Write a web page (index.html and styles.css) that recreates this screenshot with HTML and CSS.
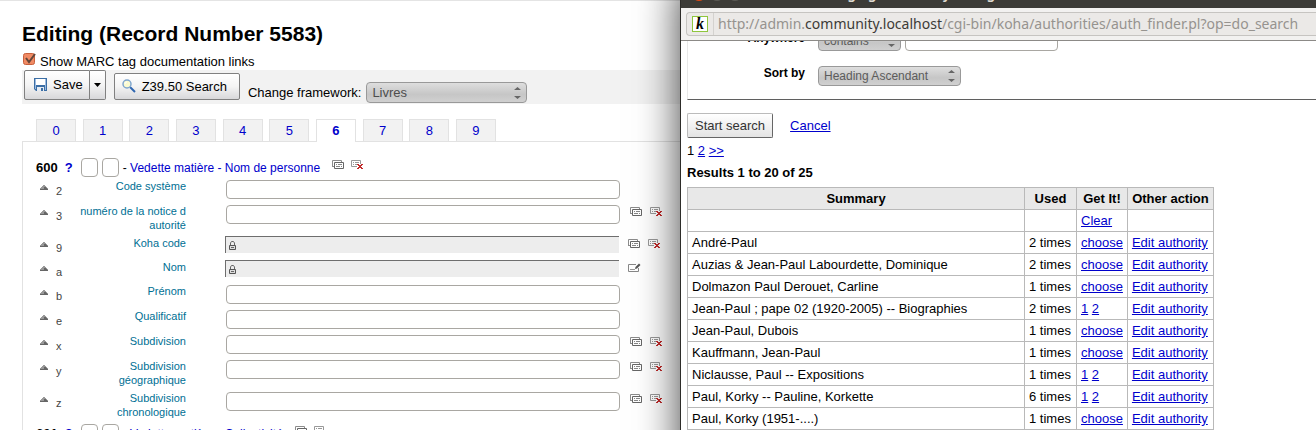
FILE: index.html
```html
<!DOCTYPE html>
<html lang="en">
<head>
    <meta charset="UTF-8">
    <meta name="viewport" content="width=device-width, initial-scale=1.0">
    <title>Koha - Editing record</title>
    <link rel="stylesheet" href="styles.css">
</head>
<body>
    <!-- Shared icons -->
    <svg class="sprite" aria-hidden="true">
        <symbol id="icon-up" viewBox="0 0 8 5">
            <path d="M3 0h2v1h1v1h1v1h1v2H0V3h1V2h1V1h1z" fill="#999"/>
            <path d="M0 4h8v1H0zM4 2h2v1h1v1H4z" fill="#666"/>
        </symbol>
        <symbol id="icon-clone" viewBox="0 0 12 9">
            <path d="M.5 6.500V.5h9v2" fill="none" stroke="#8c8c8c"/>
            <path d="M0 6.500h2" stroke="#8c8c8c"/>
            <path d="M2.500 2.500h9v6h-9z" fill="#fff" stroke="#666"/>
            <path d="M4 4.500h1M6 4.500h4M4 6.500h4M9 6.500h1" stroke="#888"/>
        </symbol>
        <symbol id="icon-delete" viewBox="0 0 12 9">
            <path d="M6 6.500H.5v-6h9V4" fill="#fff" stroke="#999"/>
            <path d="M2 2.500h1M4 2.500h4M2 4.500h1M4 4.500h2" stroke="#999"/>
            <path d="M6 4h2v1h2V4h2v1h-1v1h-1v1h1v1h1v1h-2V8H8v1H6V8h1V7h1V6H7V5H6z" fill="#c12a2a"/>
        </symbol>
        <symbol id="icon-edit" viewBox="0 0 13 9">
            <path d="M8 1.500H.5v7h10V5" fill="#fff" stroke="#888"/>
            <path d="M2 6.500h5" stroke="#999"/>
            <path d="M7 6l.5-2L11 .5 12.500 2 9 5.500z" fill="#555"/>
        </symbol>
        <symbol id="icon-lock" viewBox="0 0 7 9">
            <path d="M1.500 4V2L2.500.5h2L5.500 2v2" fill="none" stroke="#666"/>
            <path d="M.5 4.500h6v4h-6z" fill="#ddd" stroke="#555"/>
            <path d="M2 6.500h3" stroke="#666"/>
        </symbol>
    </svg>

    <main class="editor">
        <h1>Editing (Record Number 5583)</h1>
        <div class="doc-links">
            <input type="checkbox" id="marcDocs" checked>
            <label for="marcDocs">Show MARC tag documentation links</label>
        </div>

        <div class="toolbar">
            <div class="split-button">
                <button type="button" class="btn-save">
                    <svg width="13" height="13" viewBox="0 0 13 13" aria-hidden="true">
                        <path d="M0 0h13v13H2l-2-2z" fill="#3b6ea5"/>
                        <path d="M2 1h9v6H2z" fill="#fff"/>
                        <path d="M1 1h1v10H1zM11 1h1v11h-1z" fill="#9dbbe0"/>
                        <path d="M3 9h7v4H3z" fill="#e4eaf2"/>
                        <path d="M7 10h2v3H7z" fill="#3b6ea5"/>
                    </svg>
                    Save
                </button>
                <button type="button" class="btn-more" aria-label="More save options">
                    <svg width="7" height="4" viewBox="0 0 7 4" aria-hidden="true"><path d="M0 0h7L3.500 4z" fill="#000"/></svg>
                </button>
            </div>
            <button type="button" class="btn-search">
                <svg width="14" height="14" viewBox="0 0 14 14" aria-hidden="true">
                    <path d="M8 8l5 5" stroke="#2f66b0" stroke-width="2"/>
                    <circle cx="5" cy="5" r="4" fill="#fbfbd0" stroke="#7fa6cf" stroke-width="1.500"/>
                    <path d="M3 5a2 2 0 0 1 2-2" fill="none" stroke="#fff"/>
                </svg>
                Z39.50 Search
            </button>
            <div class="framework">
                <label for="framework">Change framework:</label>
                <select id="framework"><option>Livres</option></select>
            </div>
        </div>

        <nav class="tabs">
            <a href="#tab0">0</a>
            <a href="#tab1">1</a>
            <a href="#tab2">2</a>
            <a href="#tab3">3</a>
            <a href="#tab4">4</a>
            <a href="#tab5">5</a>
            <a href="#tab6" class="active">6</a>
            <a href="#tab7">7</a>
            <a href="#tab8">8</a>
            <a href="#tab9">9</a>
        </nav>

        <section class="tab-content" id="tab6">
            <div class="tag-head">
                <b>600</b>
                <a class="help" href="#doc600">?</a>
                <input type="text" class="indicator" aria-label="600 indicator 1">
                <input type="text" class="indicator" aria-label="600 indicator 2">
                <span class="tag-name">- <a href="#tag600">Vedette matière - Nom de personne</a></span>
                <button type="button" class="icon-btn" aria-label="Repeat tag"><svg width="12" height="9"><use href="#icon-clone"/></svg></button>
                <button type="button" class="icon-btn" aria-label="Delete tag"><svg width="12" height="9"><use href="#icon-delete"/></svg></button>
            </div>

            <div class="subfield">
                <svg class="up" width="8" height="5"><use href="#icon-up"/></svg>
                <span class="code">2</span>
                <label for="sf2">Code système</label>
                <input type="text" id="sf2">
                <div class="actions"></div>
            </div>
            <div class="subfield">
                <svg class="up" width="8" height="5"><use href="#icon-up"/></svg>
                <span class="code">3</span>
                <label for="sf3">numéro de la notice d autorité</label>
                <input type="text" id="sf3">
                <div class="actions">
                    <button type="button" class="icon-btn" aria-label="Clone"><svg width="12" height="9"><use href="#icon-clone"/></svg></button>
                    <button type="button" class="icon-btn" aria-label="Delete"><svg width="12" height="9"><use href="#icon-delete"/></svg></button>
                </div>
            </div>
            <div class="subfield locked">
                <svg class="up" width="8" height="5"><use href="#icon-up"/></svg>
                <span class="code">9</span>
                <label for="sf9">Koha code</label>
                <div class="readonly">
                    <svg width="7" height="9"><use href="#icon-lock"/></svg>
                    <input type="text" id="sf9" readonly>
                </div>
                <div class="actions">
                    <button type="button" class="icon-btn" aria-label="Clone"><svg width="12" height="9"><use href="#icon-clone"/></svg></button>
                    <button type="button" class="icon-btn" aria-label="Delete"><svg width="12" height="9"><use href="#icon-delete"/></svg></button>
                </div>
            </div>
            <div class="subfield locked">
                <svg class="up" width="8" height="5"><use href="#icon-up"/></svg>
                <span class="code">a</span>
                <label for="sfa">Nom</label>
                <div class="readonly">
                    <svg width="7" height="9"><use href="#icon-lock"/></svg>
                    <input type="text" id="sfa" readonly>
                </div>
                <div class="actions">
                    <button type="button" class="icon-btn" aria-label="Tag editor"><svg width="13" height="9"><use href="#icon-edit"/></svg></button>
                </div>
            </div>
            <div class="subfield">
                <svg class="up" width="8" height="5"><use href="#icon-up"/></svg>
                <span class="code">b</span>
                <label for="sfb">Prénom</label>
                <input type="text" id="sfb">
                <div class="actions"></div>
            </div>
            <div class="subfield">
                <svg class="up" width="8" height="5"><use href="#icon-up"/></svg>
                <span class="code">e</span>
                <label for="sfe">Qualificatif</label>
                <input type="text" id="sfe">
                <div class="actions"></div>
            </div>
            <div class="subfield">
                <svg class="up" width="8" height="5"><use href="#icon-up"/></svg>
                <span class="code">x</span>
                <label for="sfx">Subdivision</label>
                <input type="text" id="sfx">
                <div class="actions">
                    <button type="button" class="icon-btn" aria-label="Clone"><svg width="12" height="9"><use href="#icon-clone"/></svg></button>
                    <button type="button" class="icon-btn" aria-label="Delete"><svg width="12" height="9"><use href="#icon-delete"/></svg></button>
                </div>
            </div>
            <div class="subfield">
                <svg class="up" width="8" height="5"><use href="#icon-up"/></svg>
                <span class="code">y</span>
                <label for="sfy">Subdivision géographique</label>
                <input type="text" id="sfy">
                <div class="actions">
                    <button type="button" class="icon-btn" aria-label="Clone"><svg width="12" height="9"><use href="#icon-clone"/></svg></button>
                    <button type="button" class="icon-btn" aria-label="Delete"><svg width="12" height="9"><use href="#icon-delete"/></svg></button>
                </div>
            </div>
            <div class="subfield">
                <svg class="up" width="8" height="5"><use href="#icon-up"/></svg>
                <span class="code">z</span>
                <label for="sfz">Subdivision chronologique</label>
                <input type="text" id="sfz">
                <div class="actions">
                    <button type="button" class="icon-btn" aria-label="Clone"><svg width="12" height="9"><use href="#icon-clone"/></svg></button>
                    <button type="button" class="icon-btn" aria-label="Delete"><svg width="12" height="9"><use href="#icon-delete"/></svg></button>
                </div>
            </div>

            <div class="tag-head">
                <b>601</b>
                <a class="help" href="#doc601">?</a>
                <input type="text" class="indicator" aria-label="601 indicator 1">
                <input type="text" class="indicator" aria-label="601 indicator 2">
                <span class="tag-name">- <a href="#tag601">Vedette matière - Collectivité</a></span>
                <button type="button" class="icon-btn" aria-label="Repeat tag"><svg width="12" height="9"><use href="#icon-clone"/></svg></button>
                <button type="button" class="icon-btn" aria-label="Delete tag"><svg width="12" height="9"><use href="#icon-delete"/></svg></button>
            </div>
        </section>
    </main>

    <!-- Authority finder window -->
    <div class="popup">
        <div class="titlebar">
            <span class="dot close"></span>
            <span class="dot"></span>
            <span class="dot"></span>
            <span class="title">Cataloging › Authority - Google Chrome</span>
        </div>
        <div class="location">
            <div class="address">
                <span class="favicon">k</span>
                <span class="url">http://admin.<b>community.localhost</b>/cgi-bin/koha/authorities/auth_finder.pl?op=do_search</span>
            </div>
        </div>
        <div class="popup-body">
            <div class="criteria">
                <div class="criterion">
                    <label for="operator">Anywhere</label>
                    <select id="operator"><option>contains</option></select>
                    <input type="text" aria-label="Anywhere value">
                </div>
                <div class="criterion">
                    <label for="orderby">Sort by</label>
                    <select id="orderby"><option>Heading Ascendant</option></select>
                </div>
            </div>
            <div class="submit">
                <button type="submit">Start search</button>
                <a href="#cancel">Cancel</a>
            </div>
            <div class="pages">1 <a href="#page2">2</a> <a href="#next">&gt;&gt;</a></div>
            <div class="count">Results 1 to 20 of 25</div>
            <table class="results">
                <thead>
                    <tr><th class="summary">Summary</th><th class="used">Used</th><th>Get It!</th><th class="action">Other action</th></tr>
                </thead>
                <tbody>
                    <tr><td></td><td></td><td><a href="#clear">Clear</a></td><td></td></tr>
                    <tr><td>André-Paul</td><td>2 times</td><td><a href="#c">choose</a></td><td><a href="#e">Edit authority</a></td></tr>
                    <tr><td>Auzias &amp; Jean-Paul Labourdette, Dominique</td><td>2 times</td><td><a href="#c">choose</a></td><td><a href="#e">Edit authority</a></td></tr>
                    <tr><td>Dolmazon Paul Derouet, Carline</td><td>1 times</td><td><a href="#c">choose</a></td><td><a href="#e">Edit authority</a></td></tr>
                    <tr><td>Jean-Paul ; pape 02 (1920-2005) -- Biographies</td><td>2 times</td><td><a href="#c1">1</a> <a href="#c2">2</a></td><td><a href="#e">Edit authority</a></td></tr>
                    <tr><td>Jean-Paul, Dubois</td><td>1 times</td><td><a href="#c">choose</a></td><td><a href="#e">Edit authority</a></td></tr>
                    <tr><td>Kauffmann, Jean-Paul</td><td>1 times</td><td><a href="#c">choose</a></td><td><a href="#e">Edit authority</a></td></tr>
                    <tr><td>Niclausse, Paul -- Expositions</td><td>1 times</td><td><a href="#c1">1</a> <a href="#c2">2</a></td><td><a href="#e">Edit authority</a></td></tr>
                    <tr><td>Paul, Korky -- Pauline, Korkette</td><td>6 times</td><td><a href="#c1">1</a> <a href="#c2">2</a></td><td><a href="#e">Edit authority</a></td></tr>
                    <tr><td>Paul, Korky (1951-....)</td><td>1 times</td><td><a href="#c">choose</a></td><td><a href="#e">Edit authority</a></td></tr>
                </tbody>
            </table>
        </div>
    </div>
</body>
</html>
```
FILE: styles.css
```css
* {
    box-sizing: border-box;
}
body {
    margin: 0;
    height: 100vh;
    overflow: hidden;
    display: grid;
    grid-template-columns: 680fr 636fr;
    font-family: "Liberation Sans", Arial, sans-serif;
    font-size: 13px;
    line-height: 15px;
    color: #000;
    background: #fff;
}
a {
    color: #0000cc;
}
button, input, select {
    font: inherit;
    margin: 0;
}
.sprite {
    position: absolute;
    width: 0;
    height: 0;
}

/* Record editor */
.editor {
    min-width: 0;
    border-top: 1px solid #e4e4e4;
    padding: 21px 0 0 22px;
}
h1 {
    margin: 0;
    font-size: 21px;
    line-height: 24px;
}
.doc-links {
    display: flex;
    gap: 4px;
    padding-top: 6px;
    height: 24px;
}
.doc-links label {
    padding-top: 2px;
}
.doc-links input {
    appearance: none;
    width: 14px;
    height: 14px;
    background: url("data:image/svg+xml,%3Csvg xmlns='http://www.w3.org/2000/svg' viewBox='0 0 14 14'%3E%3Crect x='1.5' y='1.5' width='11' height='11' rx='2' fill='%23f08a63' stroke='%23c8603c'/%3E%3Cpath d='M4 6l3 4 6-8' fill='none' stroke='%23634639' stroke-width='2'/%3E%3C/svg%3E");
}
.toolbar {
    display: flex;
    align-items: flex-end;
    gap: 8px;
    height: 34px;
    padding: 0 2px 4px;
    background: #f2f2f2;
}
.split-button {
    display: flex;
}
.toolbar button {
    display: flex;
    align-items: center;
    border: 1px solid #808080;
    border-radius: 2px;
    background: linear-gradient(#fff, #f4f4f4 50%, #d8d8da);
    color: #000;
}
.toolbar .btn-save {
    height: 30px;
    gap: 6px;
    padding: 0 6px 2px 9px;
    border-radius: 2px 0 0 2px;
}
.toolbar .btn-more {
    width: 16px;
    height: 30px;
    padding: 0 0 0 4px;
    border-left: 0;
    border-radius: 0 2px 2px 0;
}
.toolbar .btn-search {
    height: 27px;
    gap: 6px;
    padding: 0 12px 1px 7px;
}
.framework {
    display: flex;
    align-items: center;
    gap: 5px;
    height: 15px;
}
select {
    appearance: none;
    border: 1px solid #999;
    border-radius: 4px;
    color: #4d4d4d;
    background: url("data:image/svg+xml,%3Csvg xmlns='http://www.w3.org/2000/svg' viewBox='0 0 7 12'%3E%3Cpath d='M0 3h7L3.500 0zM0 9h7L3.500 12z' fill='%23666'/%3E%3C/svg%3E") no-repeat right 5px center / 7px 12px, linear-gradient(#dedede, #c6c6c6 60%, #d0d0d0);
}
.framework select {
    width: 161px;
    height: 21px;
    padding: 0 5px;
}

/* Tabs */
.tabs {
    display: flex;
    justify-content: space-between;
    width: 460px;
    margin: 15px 0 0 14px;
}
.tabs a {
    width: 40px;
    height: 22px;
    padding-top: 3px;
    border: 1px solid #e2e2e2;
    border-bottom: 0;
    background: #f2f2f2;
    text-align: center;
    text-decoration: none;
}
.tabs .active {
    height: 23px;
    margin-bottom: -1px;
    background: #fff;
    font-weight: bold;
}
.tab-content {
    border: 1px solid #e2e2e2;
    border-width: 1px 0 0 1px;
    padding: 15px 0 0 13px;
}
.tag-head {
    display: flex;
    align-items: center;
    height: 22px;
    padding-bottom: 2px;
}
.tag-head .help {
    width: 16px;
    margin-left: 7px;
    font-weight: bold;
    text-decoration: none;
}
.tag-name {
    margin-right: 12px;
    padding-top: 2px;
    font-size: 12px;
}
.tag-name a {
    text-decoration: none;
}
.tag-head .indicator {
    width: 17px;
    height: 19px;
    margin-right: 4px;
}
input[type="text"] {
    min-width: 0;
    padding: 0 3px;
    border: 1px solid #a9a7a2;
    border-radius: 4px;
    background: #fff;
}
.icon-btn {
    display: flex;
    padding: 0;
    border: 0;
    background: none;
}
.tag-head .icon-btn {
    margin: 0 7px 5px 0;
}
.subfield {
    display: flex;
    align-items: flex-start;
    min-height: 25px;
    padding-bottom: 4px;
    font-size: 11px;
    line-height: 14px;
}
.up {
    margin: 6px 8px 0 4px;
}
.code {
    width: 20px;
    padding-top: 5px;
    color: #444;
}
.subfield label {
    width: 110px;
    margin-right: 40px;
    text-align: right;
    color: #006f94;
}
.subfield > input {
    flex: 1;
    height: 19px;
    margin-top: 1px;
}
.actions {
    display: flex;
    gap: 8px;
    width: 60px;
    padding: 3px 0 0 10px;
}
.locked {
    min-height: 24px;
}
.locked label {
    margin-right: 39px;
}
.locked .actions {
    width: 61px;
    padding-left: 9px;
}
.readonly {
    flex: 1;
    display: flex;
    align-items: center;
    gap: 4px;
    height: 17px;
    padding-left: 3px;
    border-top: 1px solid #6e6e6e;
    border-left: 1px solid #6e6e6e;
    background: #ededed;
}
.locked .readonly input {
    flex: 1;
    height: 15px;
    border: 0;
    background: none;
}

/* Authority finder window */
.popup {
    min-width: 0;
    height: calc(100vh + 80px);
    margin-top: -20px;
    border-left: 1px solid #2d2c29;
    background: #fff;
    box-shadow: 0 0 40px rgba(0, 0, 0, 0.75);
    z-index: 1;
    overflow: hidden;
}
.titlebar {
    display: flex;
    align-items: center;
    gap: 4px;
    height: 28px;
    padding: 0 0 0 11px;
    background: #3c3b37;
    color: #dfdbd2;
    font-family: "Noto Sans", sans-serif;
    font-weight: bold;
    white-space: nowrap;
}
.dot {
    width: 14px;
    height: 14px;
    border-radius: 50%;
    background: #5a5954;
}
.dot.close {
    background: #df4a16;
}
.title {
    margin-left: 60px;
}
.location {
    height: 33px;
    padding: 4px 0 4px 5px;
    border-bottom: 1px solid #8c8a87;
    background: #f2f1f0;
}
.address {
    display: flex;
    align-items: center;
    height: 24px;
    border: 1px solid #c6c4c1;
    border-right: 0;
    border-radius: 4px 0 0 4px;
    background: #ebe9e7;
}
.favicon {
    width: 16px;
    height: 16px;
    margin: 0 5px;
    border: 1px solid #8fc63d;
    background: #fff;
    font-family: "Liberation Serif", serif;
    font-size: 16px;
    font-style: italic;
    font-weight: bold;
    line-height: 13px;
    text-align: center;
}
.url {
    padding-left: 4px;
    border-left: 1px solid #d4d2cf;
    font-family: "Noto Sans", sans-serif;
    font-size: 14px;
    line-height: 22px;
    color: #96938f;
    white-space: nowrap;
}
.url b {
    font-weight: normal;
    color: #3c3b37;
}
.popup-body {
    padding-left: 6px;
    overflow: hidden;
}
.criteria {
    display: flex;
    flex-direction: column;
    gap: 15px;
    height: 69px;
    margin-top: -10px;
    border-left: 1px solid #e8e8e8;
    border-bottom: 1px solid #5f5f5f;
    font-size: 12px;
    line-height: 14px;
}
.criterion {
    display: flex;
}
.criterion label {
    width: 117px;
    margin-right: 13px;
    font-weight: bold;
    text-align: right;
}
.criterion select {
    height: 20px;
    padding: 0 31px 0 5px;
    color: #5c5c5c;
}
.criterion input {
    width: 153px;
    height: 20px;
    margin-left: 4px;
}
.submit {
    display: flex;
    align-items: center;
    gap: 17px;
    margin-top: 13px;
}
.submit button {
    height: 25px;
    padding: 0 7px;
    border: 1px solid #bbb;
    border-right-color: #666;
    border-bottom-color: #666;
    border-radius: 2px;
    background: linear-gradient(#fff, #e4e4e4);
    color: #333;
}
.pages {
    margin-top: 5px;
}
.count {
    margin: 7px 0;
    font-weight: bold;
}
.results {
    border-collapse: collapse;
    white-space: nowrap;
}
.results th, .results td {
    height: 22px;
    padding: 3px 4px;
    border: 1px solid #b9b9b9;
    text-align: left;
}
.results th {
    background: #e8e8e8;
    text-align: center;
}
.results .summary {
    width: 337px;
}
.results .used {
    width: 52px;
}
.results .action {
    width: 86px;
}
```
